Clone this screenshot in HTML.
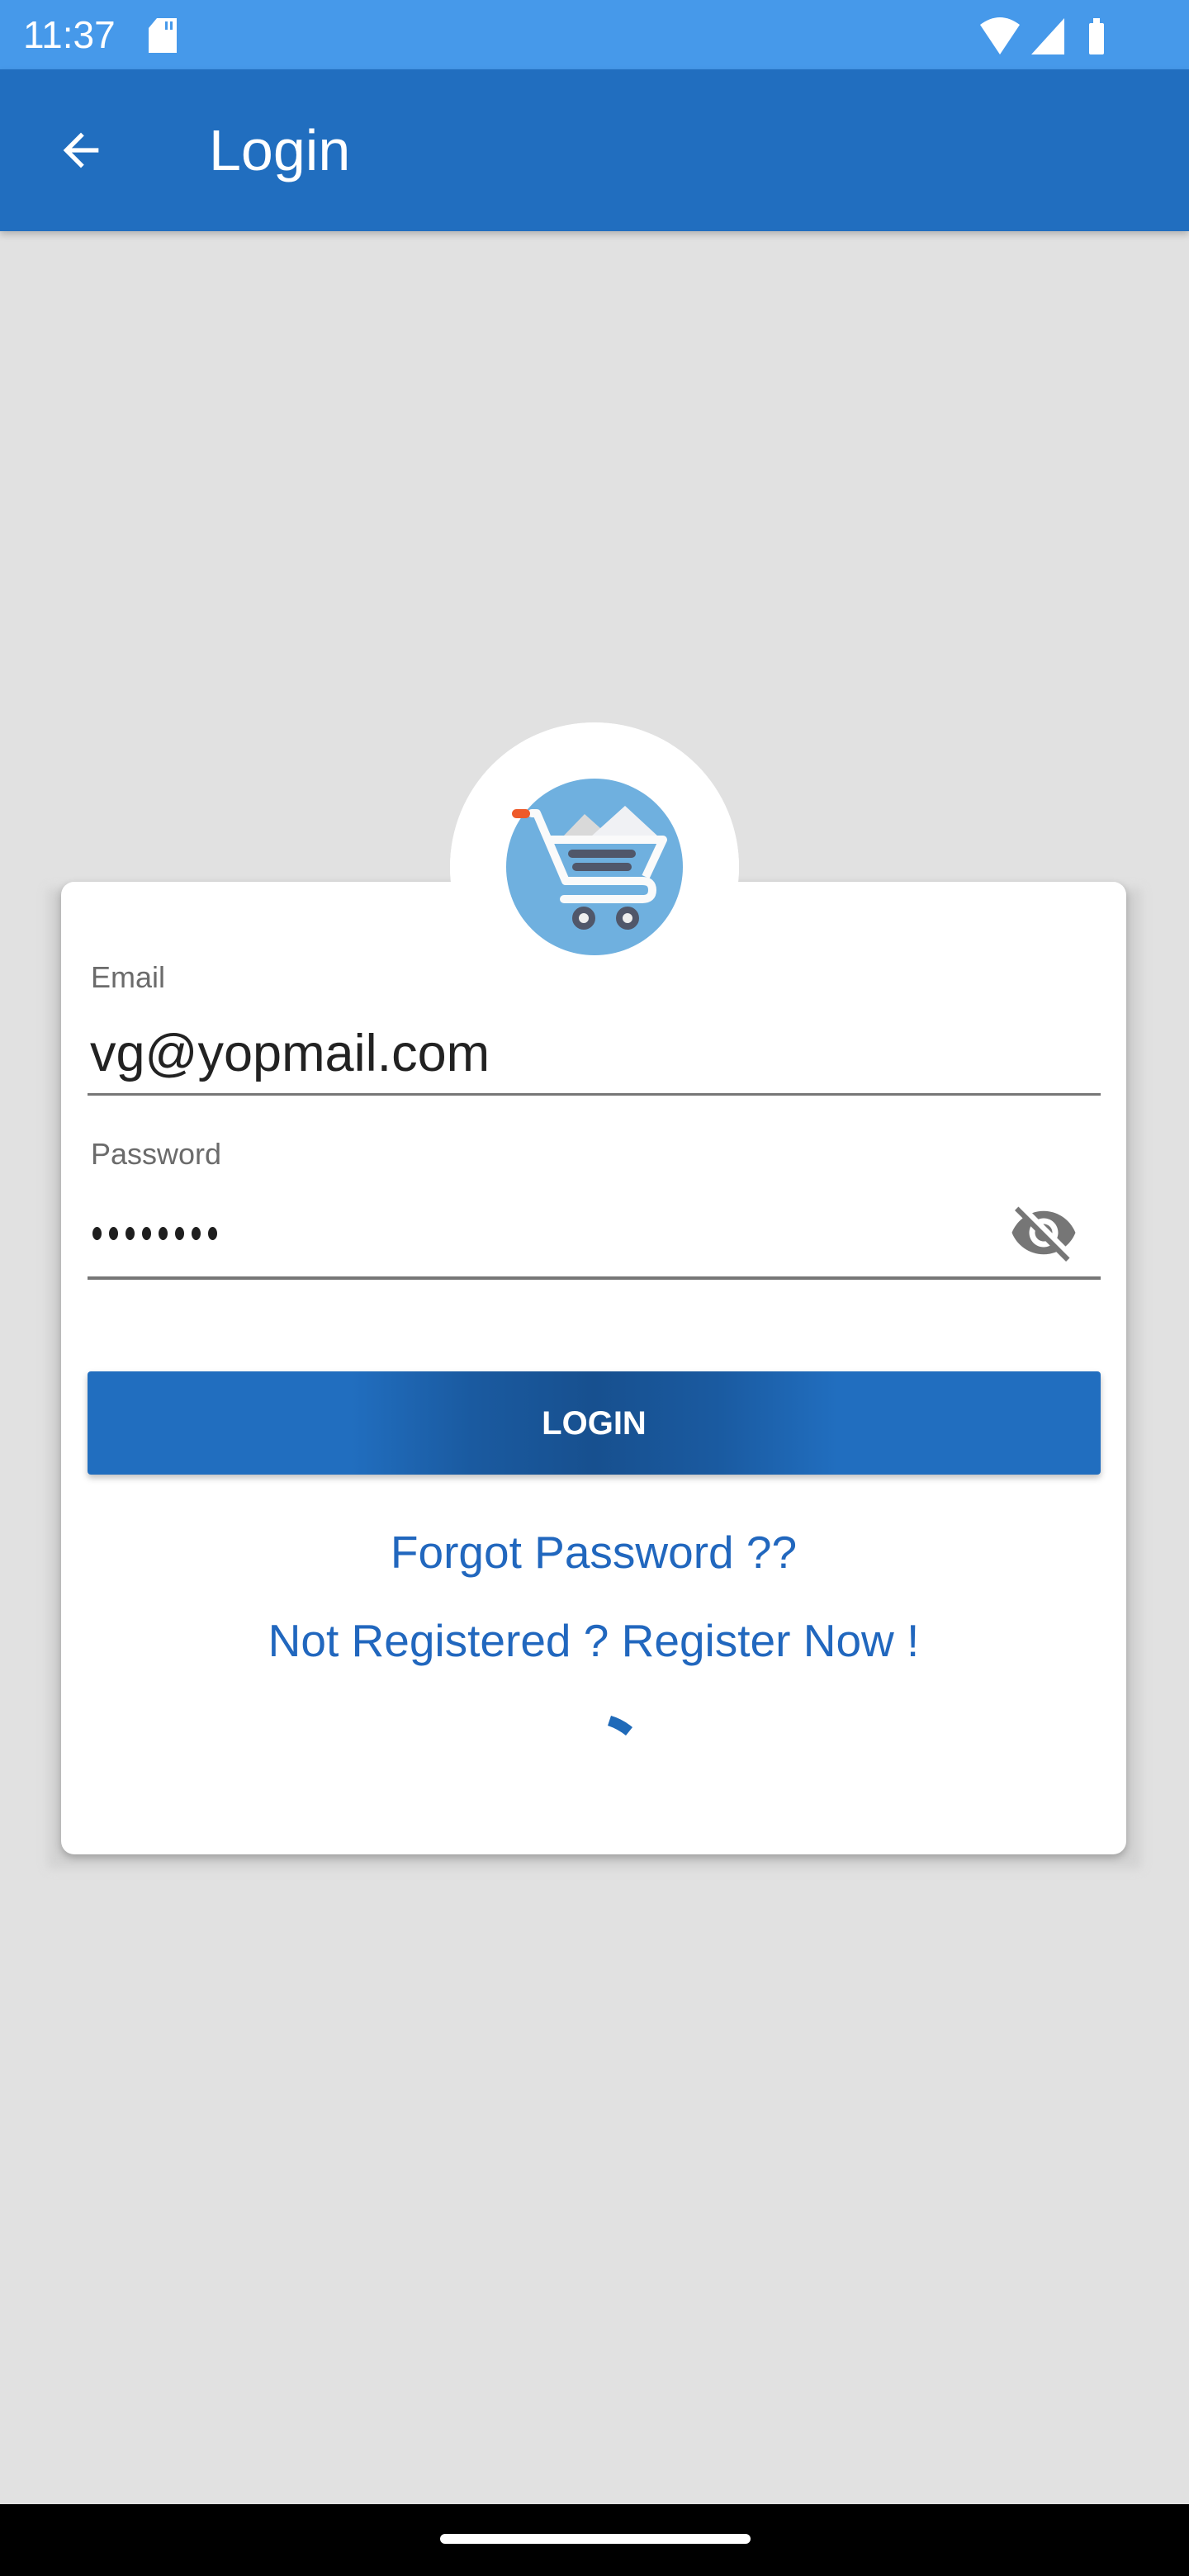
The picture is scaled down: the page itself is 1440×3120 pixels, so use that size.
<!DOCTYPE html>
<html><head><meta charset="utf-8"><style>
*{margin:0;padding:0;box-sizing:border-box}
html,body{width:1440px;height:3120px;overflow:hidden;background:#e1e1e1;font-family:"Liberation Sans",sans-serif;position:relative}
.abs{position:absolute}
.dot{display:inline-block;width:11px;height:16px;border-radius:50%;background:#1e1e1e;margin-right:9px}
</style></head><body>
<div class="abs" style="left:0;top:0;width:1440px;height:84px;background:#4699ea"></div>
<div class="abs" style="left:28px;top:12px;color:#fff;font-size:46px;line-height:60px">11:37</div>
<svg class="abs" style="left:178px;top:20px" width="40" height="46" viewBox="0 0 40 46"><path d="M12 2h24v42H2V14z" fill="#fff"/><rect x="22" y="6" width="3" height="10" fill="#4699ea"/><rect x="28" y="6" width="3" height="10" fill="#4699ea"/></svg>
<svg class="abs" style="left:1185px;top:18px" width="160" height="50" viewBox="0 0 160 50"><path d="M2 12 Q26 -6 50 12 L26 48z" fill="#fff"/><path d="M104 4 V48 H64z" fill="#fff"/><rect x="134" y="10" width="18" height="38" rx="2" fill="#fff"/><rect x="139" y="4" width="8" height="8" fill="#fff"/></svg>
<div class="abs" style="left:0;top:84px;width:1440px;height:196px;background:#216ebf;box-shadow:0 4px 8px rgba(0,0,0,.2)"></div>
<svg class="abs" style="left:66px;top:150px" width="64" height="64" viewBox="0 0 24 24"><path d="M20 11H7.83l5.59-5.59L12 4l-8 8 8 8 1.41-1.41L7.83 13H20v-2z" fill="#fff"/></svg>
<div class="abs" style="left:253px;top:140px;color:#fff;font-size:70px;line-height:84px">Login</div>
<div class="abs" style="left:58px;top:1076px;width:1324px;height:1187px;background:#cfcfcf;filter:blur(6px);opacity:.8"></div>
<div class="abs" style="left:545px;top:875px;width:350px;height:350px;border-radius:50%;background:#fff"></div>
<div class="abs" style="left:74px;top:1068px;width:1290px;height:1178px;background:#fff;border-radius:16px;box-shadow:0 4px 10px rgba(0,0,0,.25)"></div>
<div class="abs" style="left:545px;top:875px;width:350px;height:350px;border-radius:50%;background:#fff"></div>
<svg class="abs" style="left:600px;top:930px" width="240" height="240" viewBox="600 930 240 240">
<circle cx="720" cy="1050" r="107" fill="#6fb0df"/>
<path d="M682 1013 L708 986 L727 1003 L727 1013z" fill="#d9d9d9"/>
<path d="M716 1013 L757 976 L797 1013z" fill="#f0f1f4"/>
<path d="M644 985 L650 985 L685 1067 H778 Q790 1067 790 1078 Q790 1089 778 1089 H683" fill="none" stroke="#fafafa" stroke-width="10" stroke-linecap="round" stroke-linejoin="round"/>
<path d="M667 1017 H803 L782 1062" fill="none" stroke="#fafafa" stroke-width="10" stroke-linejoin="round"/>
<rect x="620" y="980" width="22" height="11" rx="5.5" fill="#ee5a2a"/>
<rect x="688" y="1029" width="82" height="10" rx="5" fill="#50576a"/>
<rect x="693" y="1045" width="72" height="10" rx="5" fill="#50576a"/>
<circle cx="707" cy="1112" r="10" fill="#eee" stroke="#50576a" stroke-width="8"/>
<circle cx="760" cy="1112" r="10" fill="#eee" stroke="#50576a" stroke-width="8"/>
</svg>
<div class="abs" style="left:110px;top:1162px;color:#6b6b6b;font-size:36px;line-height:44px">Email</div>
<div class="abs" style="left:109px;top:1240px;color:#222;font-size:63px;line-height:72px">vg@yopmail.com</div>
<div class="abs" style="left:106px;top:1324px;width:1227px;height:3px;background:#777"></div>
<div class="abs" style="left:110px;top:1376px;color:#6b6b6b;font-size:36px;line-height:44px">Password</div>
<div class="abs" style="left:112px;top:1486px;height:20px;line-height:0"><span class="dot"></span><span class="dot"></span><span class="dot"></span><span class="dot"></span><span class="dot"></span><span class="dot"></span><span class="dot"></span><span class="dot"></span></div>
<svg class="abs" style="left:1222px;top:1451px" width="84" height="84" viewBox="0 0 24 24"><path fill="#767676" d="M12 7c2.76 0 5 2.24 5 5 0 .65-.13 1.260-.36 1.83l2.92 2.92c1.51-1.26 2.7-2.89 3.43-4.75-1.730-4.390-6-7.5-11-7.5-1.4 0-2.74.25-3.98.7l2.16 2.16C10.74 7.13 11.35 7 12 7zM2 4.27l2.28 2.28.46.46C3.08 8.3 1.78 10.02 1 12c1.73 4.39 6 7.5 11 7.5 1.55 0 3.03-.3 4.38-.84l.42.42L19.73 22 21 20.73 3.27 3 2 4.27zM7.53 9.8l1.55 1.55c-.05.21-.08.43-.08.65 0 1.66 1.34 3 3 3 .22 0 .44-.03.65-.08l1.55 1.55c-.67.33-1.41.53-2.2.53-2.76 0-5-2.24-5-5 0-.79.2-1.53.53-2.2zm4.31-.78l3.15 3.15.02-.16c0-1.66-1.34-3-3-3l-.17.01z"/></svg>
<div class="abs" style="left:106px;top:1546px;width:1227px;height:4px;background:#777"></div>
<div class="abs" style="left:106px;top:1661px;width:1227px;height:125px;border-radius:4px;background:linear-gradient(90deg,#216ebf 0%,#216ebf 26%,#1a5aa0 38%,#17508f 50%,#1a5aa0 62%,#216ebf 74%,#216ebf 100%);box-shadow:0 4px 8px rgba(0,0,0,.25)"></div>
<div class="abs" style="left:106px;top:1700px;width:1227px;text-align:center;color:#fff;font-size:40px;line-height:48px;font-weight:bold">LOGIN</div>
<div class="abs" style="left:74px;top:1848px;width:1290px;text-align:center;color:#2167be;font-size:55px;line-height:64px">Forgot Password ??</div>
<div class="abs" style="left:74px;top:1955px;width:1290px;text-align:center;color:#2167be;font-size:55px;line-height:64px">Not Registered ? Register Now !</div>
<svg class="abs" style="left:730px;top:2070px" width="50" height="40" viewBox="0 0 50 40"><path d="M10 8 Q24 12 36 22 L28 32 Q18 24 6 20z" fill="#1f6ab9"/></svg>
<div class="abs" style="left:0;top:3033px;width:1440px;height:87px;background:#000"></div>
<div class="abs" style="left:533px;top:3069px;width:376px;height:12px;border-radius:6px;background:#fff"></div>
</body></html>
